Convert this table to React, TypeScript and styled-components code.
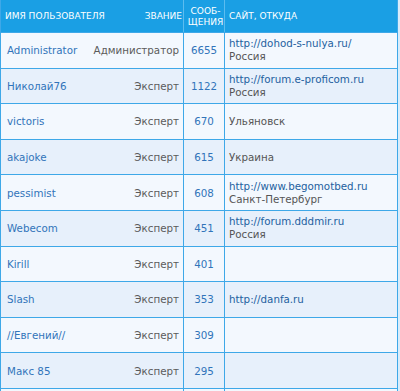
import React from "react";
import styled, { createGlobalStyle } from "styled-components";

const GlobalStyle = createGlobalStyle`
  html, body {
    margin: 0;
    padding: 0;
    background: #d9ecfa;
    overflow: hidden;
  }
`;

const Table = styled.div`
  width: 398px;
  height: 391px;
  overflow: hidden;
  box-sizing: border-box;
  border-left: 1px solid #3ea8e8;
  border-right: 1px solid #3ea8e8;
  font-family: "DejaVu Sans", Verdana, sans-serif;
`;

const HeaderRow = styled.div`
  display: grid;
  grid-template-columns: 182px 41px 173px;
  height: 32px;
  background-color: #1a9fe4;
  color: #ffffff;
  font-size: 9px;
  text-transform: uppercase;
`;

const HeadCell = styled.div<{ $line?: boolean; $center?: boolean }>`
  display: flex;
  align-items: center;
  justify-content: ${(p) => (p.$center ? "center" : "space-between")};
  text-align: ${(p) => (p.$center ? "center" : "left")};
  box-sizing: border-box;
  line-height: 10.5px;
  padding: 1px 1px 0 4px;
  border-left: ${(p) => (p.$line ? "1px solid #5cbcef" : "none")};
`;

const Row = styled.div<{ $even: boolean }>`
  display: grid;
  grid-template-columns: 182px 41px 173px;
  height: 35.6px;
  box-sizing: border-box;
  border-top: 1px solid #3ea8e8;
  background-color: ${(p) => (p.$even ? "#e7f0fb" : "#f3f8fe")};
  font-size: 10.3px;
`;

const NameCell = styled.div`
  display: flex;
  align-items: center;
  justify-content: space-between;
  padding: 0 4px 0 6px;
`;

const UserName = styled.span`
  color: #3174ba;
`;

const Rank = styled.span`
  color: #5b5b5b;
`;

const Posts = styled.div`
  display: flex;
  align-items: center;
  justify-content: center;
  box-sizing: border-box;
  border-left: 1px solid #3ea8e8;
  color: #3174ba;
`;

const SiteCell = styled.div`
  display: flex;
  flex-direction: column;
  justify-content: center;
  box-sizing: border-box;
  border-left: 1px solid #3ea8e8;
  padding-left: 4px;
  line-height: 13px;
`;

const Link = styled.span`
  color: #235f9f;
`;

const City = styled.span`
  color: #555555;
`;

type User = {
  name: string;
  rank: string;
  posts: number;
  site?: string;
  city?: string;
};

const users: User[] = [
  { name: "Administrator", rank: "Администратор", posts: 6655, site: "http://dohod-s-nulya.ru/", city: "Россия" },
  { name: "Николай76", rank: "Эксперт", posts: 1122, site: "http://forum.e-proficom.ru", city: "Россия" },
  { name: "victoris", rank: "Эксперт", posts: 670, city: "Ульяновск" },
  { name: "akajoke", rank: "Эксперт", posts: 615, city: "Украина" },
  { name: "pessimist", rank: "Эксперт", posts: 608, site: "http://www.begomotbed.ru", city: "Санкт-Петербург" },
  { name: "Webecom", rank: "Эксперт", posts: 451, site: "http://forum.dddmir.ru", city: "Россия" },
  { name: "Kirill", rank: "Эксперт", posts: 401 },
  { name: "Slash", rank: "Эксперт", posts: 353, site: "http://danfa.ru" },
  { name: "//Евгений//", rank: "Эксперт", posts: 309 },
  { name: "Макс 85", rank: "Эксперт", posts: 295 },
  { name: "", rank: "", posts: 0 },
];

export default function App() {
  return (
    <>
      <GlobalStyle />
      <Table>
        <HeaderRow>
          <HeadCell>
            <span>Имя пользователя</span>
            <span>Звание</span>
          </HeadCell>
          <HeadCell $line $center>
            Сооб-
            <br />
            щения
          </HeadCell>
          <HeadCell $line>Сайт, откуда</HeadCell>
        </HeaderRow>
        {users.map((u, i) => (
          <Row key={i} $even={i % 2 === 1}>
            <NameCell>
              <UserName>{u.name}</UserName>
              <Rank>{u.rank}</Rank>
            </NameCell>
            <Posts>{u.posts || ""}</Posts>
            <SiteCell>
              {u.site && <Link>{u.site}</Link>}
              {u.city && <City>{u.city}</City>}
            </SiteCell>
          </Row>
        ))}
      </Table>
    </>
  );
}
